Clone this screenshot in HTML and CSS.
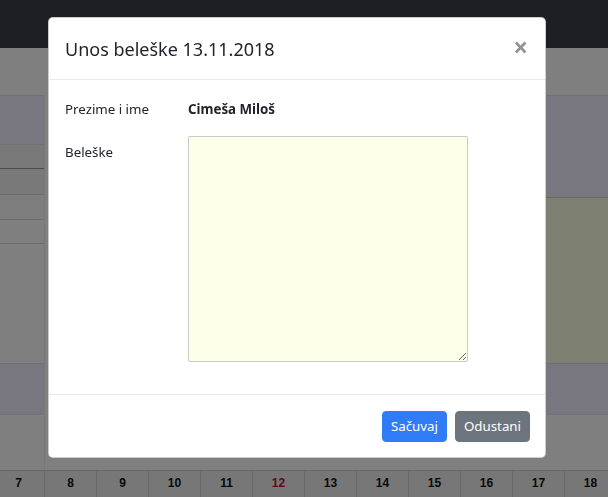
FILE: index.html
```html
<!DOCTYPE html>
<html lang="sr">
<head>
<meta charset="utf-8">
<title>Unos beleške</title>
<link rel="stylesheet" href="styles.css">
</head>
<body>
<div class="page">
  <nav class="topbar"></nav>
  <div class="toolbar"></div>
  <div class="board">
    <div class="side side-left">
      <div class="blk head-lav"></div>
      <div class="blk row-a"></div>
      <div class="blk row-b"></div>
      <div class="blk row-c"></div>
      <div class="blk row-d"></div>
      <div class="blk plain-a"></div>
      <div class="blk lav-b"></div>
      <div class="blk plain-b"></div>
    </div>
    <div class="center"></div>
    <div class="side side-right">
      <div class="blk head-lav-r"></div>
      <div class="blk yellow"></div>
      <div class="blk lav-b"></div>
      <div class="blk plain-b"></div>
    </div>
  </div>
  <div class="days">
    <div class="day">7</div>
    <div class="day">8</div>
    <div class="day">9</div>
    <div class="day">10</div>
    <div class="day">11</div>
    <div class="day today">12</div>
    <div class="day">13</div>
    <div class="day">14</div>
    <div class="day">15</div>
    <div class="day">16</div>
    <div class="day">17</div>
    <div class="day">18</div>
  </div>
</div>

<div class="backdrop"></div>
<div class="modal-wrap">
  <div class="modal">
    <div class="modal-header">
      <h5 class="modal-title">Unos beleške 13.11.2018</h5>
      <button class="close" type="button" aria-label="Close">×</button>
    </div>
    <div class="modal-body">
      <div class="form-row first">
        <label class="label">Prezime i ime</label>
        <div class="value"><strong>Cimeša Miloš</strong></div>
      </div>
      <div class="form-row">
        <label class="label label-notes" for="notes">Beleške</label>
        <div class="value"><textarea id="notes" class="notes"></textarea></div>
      </div>
    </div>
    <div class="modal-footer">
      <button class="btn btn-primary" type="button">Sačuvaj</button>
      <button class="btn btn-secondary" type="button">Odustani</button>
    </div>
  </div>
</div>
</body>
</html>
```

FILE: styles.css
```css
* { box-sizing: border-box; }
html, body { margin: 0; padding: 0; }
body {
  width: 608px;
  height: 497px;
  overflow: hidden;
  font-family: "Noto Sans", "Open Sans", sans-serif;
  color: #212529;
  background: #fff;
}
.page {
  display: flex;
  flex-direction: column;
  height: 497px;
}
.topbar { height: 48px; background: #3d3f47; flex: none; }
.toolbar { height: 47px; background: #fff; flex: none; }
.board {
  height: 375px;
  flex: none;
  display: flex;
}
.side { display: flex; flex-direction: column; }
.side-left { width: 45px; border-right: 1px solid #f2f2f2; }
.center { flex: 1; background: #fff; }
.side-right { width: 62px; }
.blk { flex: none; }
.head-lav { height: 49px; background: #f1edfd; border-top: 1px solid #e2e0ea; }
.row-a { height: 25px; background: #f1f1f1; border-top: 1px solid #e4e4e4; border-bottom: 1px solid #9a9a9a; }
.row-b { height: 26px; background: #f3f3f3; border-bottom: 1px solid #dadada; }
.row-c { height: 25px; background: #fafafa; border-bottom: 1px solid #dadada; }
.row-d { height: 24px; background: #fff; border-bottom: 1px solid #dadada; }
.plain-a { height: 119px; background: #fff; }
.lav-b { height: 52px; background: #f1edfd; border-top: 1px solid #e0dde8; border-bottom: 1px solid #e8e8e8; }
.plain-b { flex: 1; background: #fff; }
.head-lav-r { height: 103px; background: #f1edfd; border-top: 1px solid #e2e0ea; border-bottom: 1px solid #d6d6cc; }
.yellow { height: 165px; background: #fbfee1; }

.days {
  flex: none;
  height: 27px;
  display: flex;
  margin-left: -7px;
  border-top: 1px solid #d0d0d0;
  background: #eeeeee;
}
.day {
  flex: none;
  width: 52px;
  border-right: 1px solid #d2d2d2;
  font-family: "Liberation Sans", Arial, sans-serif;
  font-weight: 700;
  font-size: 12px;
  color: #111;
  display: flex;
  justify-content: center;
  align-items: center;
  padding-bottom: 2px;
}
.day.today { color: #c8102e; }

.backdrop {
  position: fixed;
  inset: 0;
  background: rgba(0, 0, 0, 0.5);
}
.modal-wrap {
  position: fixed;
  inset: 0;
  padding: 17px 0 0 48px;
}
.modal {
  width: 498px;
  background: #fff;
  border: 1px solid rgba(0, 0, 0, 0.2);
  border-radius: 5px;
  display: flex;
  flex-direction: column;
}
.modal-header {
  display: flex;
  align-items: flex-start;
  justify-content: space-between;
  padding: 16px 16px 15px 16px;
  height: 62px;
  border-bottom: 1px solid #e9ecef;
}
.modal-title {
  margin: 0;
  font-size: 18px;
  font-weight: 400;
  line-height: 30px;
  color: #212529;
}
.close {
  border: 0;
  background: transparent;
  padding: 0;
  margin: 0 1px 0 0;
  font-family: "Noto Sans", sans-serif;
  font-size: 26px;
  font-weight: 700;
  line-height: 27px;
  color: #000;
  opacity: 0.42;
  text-shadow: 0 1px 0 #fff;
}
.modal-body {
  padding: 16px 16px 16px 16px;
}
.form-row {
  display: grid;
  grid-template-columns: 123px 1fr;
  margin-bottom: 16px;
  font-size: 13.3px;
  line-height: 21px;
}
.form-row.first { height: 24px; padding-top: 3px; }
.label { color: #212529; }
.label-notes { padding-top: 6px; }
.value strong { font-weight: 700; }
.notes {
  display: block;
  width: 280px;
  height: 226px;
  margin: 0;
  background: #fdffe9;
  border: 1px solid #c9c9c9;
  border-radius: 2px;
  resize: both;
  font-family: "Noto Sans", sans-serif;
}
.modal-footer {
  display: flex;
  justify-content: flex-end;
  gap: 8px;
  padding: 16px 15px 15px 16px;
  border-top: 1px solid #e9ecef;
}
.btn {
  height: 31px;
  border: 1px solid transparent;
  border-radius: 4px;
  padding: 0 8px;
  font-family: "Noto Sans", sans-serif;
  font-size: 13.3px;
  line-height: 27px;
  color: #fff;
}
.btn-primary { background: #2f7cf6; border-color: #2f7cf6; }
.btn-secondary { background: #6c757d; border-color: #6c757d; }
```
